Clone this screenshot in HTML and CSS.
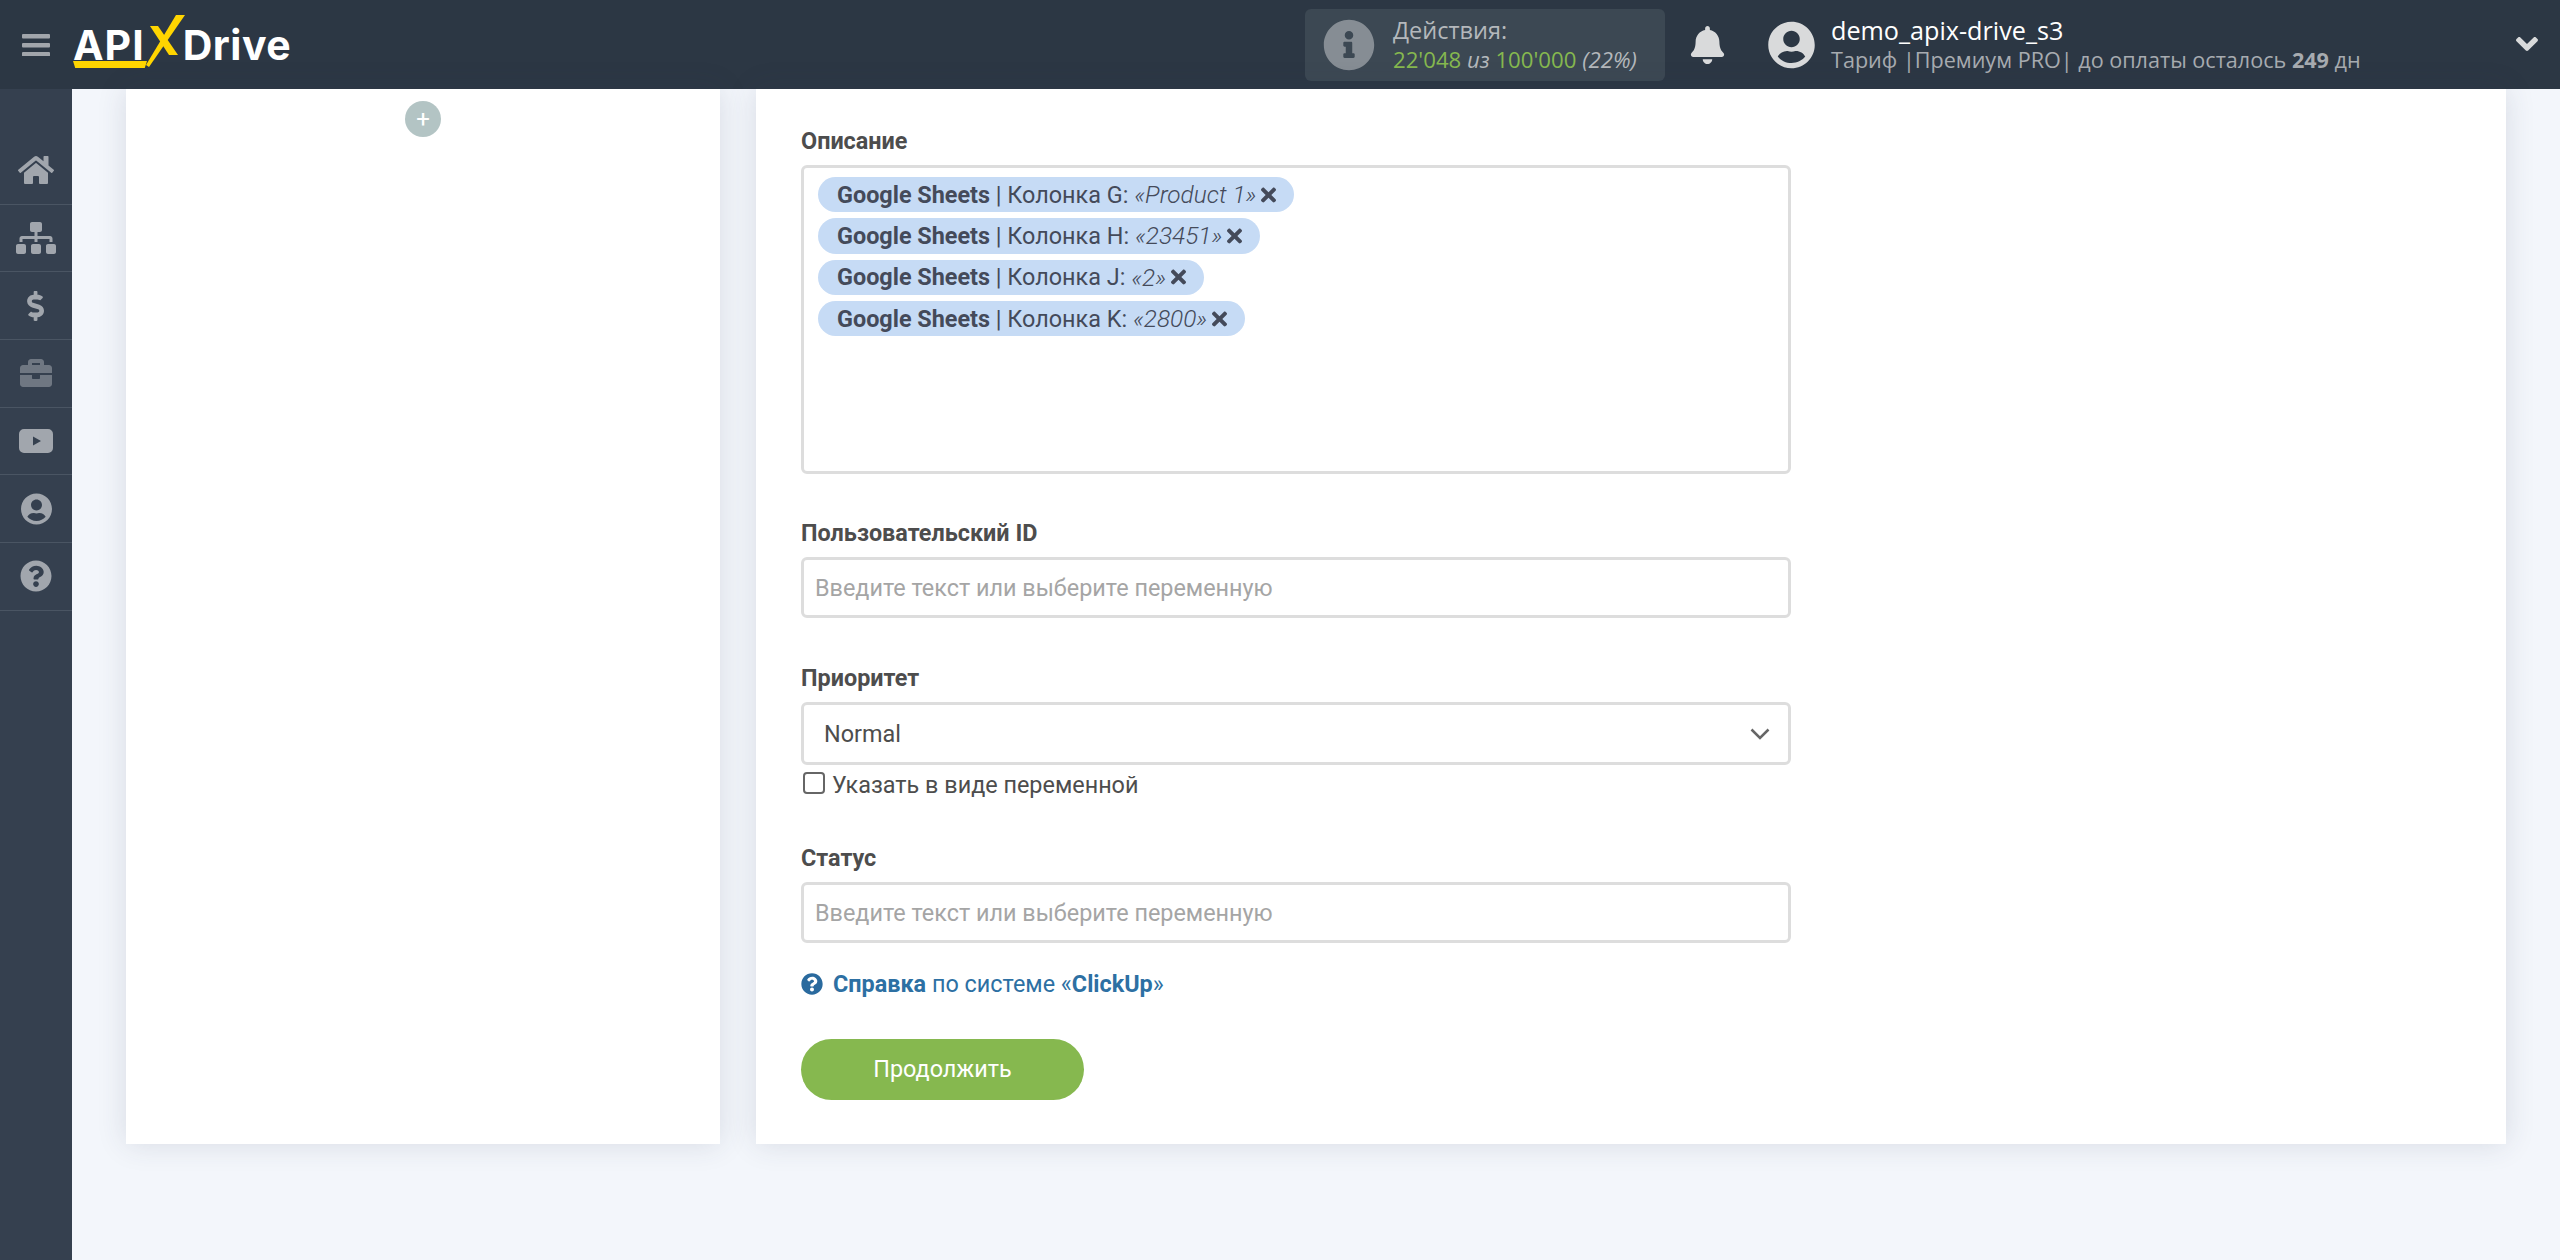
FILE: index.html
```html
<!DOCTYPE html>
<html>
	<head>
		<meta charset="UTF-8">
		<title>ApiX-Drive</title>
		<link rel="stylesheet" href="styles.css">
	</head>
	<body>
		<!--шапка-->
		<header class="topbar">
			<svg class="burger" viewBox="0 0 28 22"><rect y="0" width="28" height="4.4" rx="1"/><rect y="9" width="28" height="4.4" rx="1"/><rect y="18" width="28" height="4.4" rx="1"/></svg>
			<div class="logo">
				<span class="logo-api">API</span>
				<svg class="logo-x" viewBox="0 0 42 52"><polygon points="2,50 32,0 41,0 5,52"/><polygon points="6,11 14,11 34,40 25,40"/></svg>
				<span class="logo-drive">Drive</span>
			</div>
			<div class="stats">
				<svg class="stats-icon" viewBox="0 0 512 512"><path d="M256 8C119.043 8 8 119.083 8 256c0 136.997 111.043 248 248 248s248-111.003 248-248C504 119.083 392.957 8 256 8zm0 110c23.196 0 42 18.804 42 42s-18.804 42-42 42-42-18.804-42-42 18.804-42 42-42zm56 254c0 6.627-5.373 12-12 12h-88c-6.627 0-12-5.373-12-12v-24c0-6.627 5.373-12 12-12h12v-64h-12c-6.627 0-12-5.373-12-12v-24c0-6.627 5.373-12 12-12h64c6.627 0 12 5.373 12 12v100h12c6.627 0 12 5.373 12 12v24z"/></svg>
				<div class="stats-text">
					<div class="stats-title">Действия:</div>
					<div class="stats-line"><span class="green">22'048</span> <i>из</i> <span class="green">100'000</span> <i>(22%)</i></div>
				</div>
			</div>
			<svg class="bell" viewBox="0 0 448 512"><path d="M224 512c35.32 0 63.97-28.65 63.97-64H160.03c0 35.35 28.65 64 63.97 64zm215.39-149.71c-19.32-20.76-55.47-51.99-55.47-154.29 0-77.7-54.48-139.9-127.94-155.16V32c0-17.67-14.32-32-31.98-32s-31.98 14.33-31.98 32v20.84C118.56 68.1 64.08 130.3 64.08 208c0 102.3-36.15 133.53-55.47 154.29-6 6.45-8.66 14.16-8.61 21.71.11 16.4 12.98 32 32.1 32h383.8c19.12 0 32-15.6 32.1-32 .05-7.55-2.61-15.27-8.61-21.71z"/></svg>
			<svg class="avatar" viewBox="0 0 496 512"><path d="M248 8C111 8 0 119 0 256s111 248 248 248 248-111 248-248S385 8 248 8zm0 96c48.6 0 88 39.4 88 88s-39.4 88-88 88-88-39.4-88-88 39.4-88 88-88zm0 344c-58.7 0-111.3-26.6-146.5-68.2 18.8-35.4 55.6-59.8 98.5-59.8 2.4 0 4.8.4 7.1 1.1 13 4.2 26.6 6.9 40.9 6.9 14.3 0 28-2.7 40.9-6.9 2.3-.7 4.7-1.1 7.1-1.1 42.9 0 79.7 24.4 98.5 59.8C359.3 421.4 306.7 448 248 448z"/></svg>
			<div class="account">
				<div class="account-name">demo_apix-drive_s3</div>
				<div class="account-plan">Тариф |Премиум PRO| до оплаты осталось <b>249</b> дн</div>
			</div>
			<svg class="account-arrow" viewBox="0 0 320 512"><path d="M143 352.3L7 216.3c-9.4-9.4-9.4-24.6 0-33.9l22.6-22.6c9.4-9.4 24.6-9.4 33.9 0l96.4 96.4 96.4-96.4c9.4-9.4 24.6-9.4 33.9 0l22.6 22.6c9.4 9.4 9.4 24.6 0 33.9l-136 136c-9.2 9.4-24.4 9.4-33.8 0z"/></svg>
		</header>

		<div class="page">
			<!--боковое меню-->
			<nav class="sidebar">
				<a class="side-item"><svg viewBox="0 0 576 512" width="36" height="32"><path d="M280.37 148.26L96 300.11V464a16 16 0 0 0 16 16l112.06-.29a16 16 0 0 0 15.92-16V368a16 16 0 0 1 16-16h64a16 16 0 0 1 16 16v95.64a16 16 0 0 0 16 16.05L464 480a16 16 0 0 0 16-16V300L295.67 148.26a12.19 12.19 0 0 0-15.3 0zM571.6 251.47L488 182.56V44.05a12 12 0 0 0-12-12h-56a12 12 0 0 0-12 12v72.61L318.47 43a48 48 0 0 0-61 0L4.34 251.47a12 12 0 0 0-1.6 16.9l25.5 31A12 12 0 0 0 45.15 301l235.22-193.74a12.19 12.19 0 0 1 15.3 0L530.9 301a12 12 0 0 0 16.9-1.6l25.5-31a12 12 0 0 0-1.7-16.93z"/></svg></a>
				<a class="side-item"><svg viewBox="0 0 640 512" width="40" height="32"><path d="M128 352H32c-17.67 0-32 14.33-32 32v96c0 17.67 14.33 32 32 32h96c17.67 0 32-14.33 32-32v-96c0-17.67-14.33-32-32-32zm-24-80h192v48h48v-48h192v48h48v-57.59c0-21.17-17.23-38.41-38.41-38.41H344v-64h40c17.67 0 32-14.33 32-32V32c0-17.67-14.33-32-32-32H256c-17.67 0-32 14.33-32 32v96c0 17.67 14.33 32 32 32h40v64H94.41C73.23 224 56 241.23 56 262.41V320h48v-48zm264 80h-96c-17.67 0-32 14.33-32 32v96c0 17.67 14.33 32 32 32h96c17.67 0 32-14.33 32-32v-96c0-17.67-14.33-32-32-32zm240 0h-96c-17.67 0-32 14.33-32 32v96c0 17.67 14.33 32 32 32h96c17.67 0 32-14.33 32-32v-96c0-17.67-14.33-32-32-32z"/></svg></a>
				<a class="side-item"><svg viewBox="0 0 320 512" width="19" height="30"><path d="M209.2 233.4l-108-31.6C88.7 198.2 80 186.5 80 173.5c0-16.3 13.2-29.5 29.5-29.5h66.3c12.2 0 24.2 3.7 34.2 10.5 6.1 4.1 14.3 3.1 19.5-2l34.8-34c7.1-6.9 6.1-18.4-1.8-24.5C238 74.8 207.4 64.1 176 64V16c0-8.8-7.2-16-16-16h-32c-8.8 0-16 7.2-16 16v48h-2.5C45.8 64-5.4 118.7.5 183.6c4.2 46.1 39.4 83.6 83.8 96.6l102.5 30c12.5 3.7 21.2 15.3 21.2 28.3 0 16.3-13.2 29.5-29.5 29.5h-66.3C100 368 88 364.3 78 357.5c-6.1-4.1-14.3-3.1-19.5 2l-34.8 34c-7.1 6.9-6.1 18.4 1.8 24.5 24.5 19.2 55.1 29.9 86.5 30v48c0 8.8 7.2 16 16 16h32c8.8 0 16-7.2 16-16v-48.2c46.6-.9 90.3-28.6 105.7-72.7 21.5-61.6-14.6-124.8-72.5-141.7z"/></svg></a>
				<a class="side-item side-dim"><svg viewBox="0 0 512 512" width="32" height="32"><path d="M320 336c0 8.84-7.16 16-16 16h-96c-8.84 0-16-7.16-16-16v-48H0v144c0 25.6 22.4 48 48 48h416c25.6 0 48-22.4 48-48V288H320v48zm144-208h-80V80c0-25.6-22.4-48-48-48H176c-25.6 0-48 22.4-48 48v48H48c-25.6 0-48 22.4-48 48v80h512v-80c0-25.6-22.4-48-48-48zm-144 0H192V96h128v32z"/></svg></a>
				<a class="side-item"><svg viewBox="0 0 34 24" width="34" height="24"><path fill-rule="evenodd" d="M5 0h24a5 5 0 0 1 5 5v14a5 5 0 0 1-5 5H5a5 5 0 0 1-5-5V5a5 5 0 0 1 5-5zm9 7.500v9l8-4.500z"/></svg></a>
				<a class="side-item"><svg viewBox="0 0 496 512" width="31" height="32"><path d="M248 8C111 8 0 119 0 256s111 248 248 248 248-111 248-248S385 8 248 8zm0 96c48.6 0 88 39.4 88 88s-39.4 88-88 88-88-39.4-88-88 39.4-88 88-88zm0 344c-58.7 0-111.3-26.6-146.5-68.2 18.8-35.4 55.6-59.8 98.5-59.8 2.4 0 4.8.4 7.1 1.1 13 4.2 26.6 6.9 40.9 6.9 14.3 0 28-2.7 40.9-6.9 2.3-.7 4.7-1.1 7.1-1.1 42.9 0 79.7 24.4 98.5 59.8C359.3 421.4 306.7 448 248 448z"/></svg></a>
				<a class="side-item"><svg viewBox="0 0 512 512" width="32" height="32"><path d="M504 256c0 136.997-111.043 248-248 248S8 392.997 8 256C8 119.083 119.043 8 256 8s248 111.083 248 248zM262.655 90c-54.497 0-89.255 22.957-116.549 63.758-3.536 5.286-2.353 12.415 2.715 16.258l34.699 26.31c5.205 3.947 12.621 3.008 16.665-2.122 17.864-22.658 30.113-35.797 57.303-35.797 20.429 0 45.698 13.148 45.698 32.958 0 14.976-12.363 22.667-32.534 33.976C247.128 238.528 216 254.941 216 296v4c0 6.627 5.373 12 12 12h56c6.627 0 12-5.373 12-12v-1.333c0-28.462 83.186-29.647 83.186-106.667 0-58.002-60.165-102-116.531-102zM256 338c-25.365 0-46 20.635-46 46 0 25.364 20.635 46 46 46s46-20.636 46-46c0-25.365-20.635-46-46-46z"/></svg></a>
			</nav>

			<main class="content">
				<!--левая колонка-->
				<section class="card card-left">
					<div class="add-btn">+</div>
				</section>

				<!--форма-->
				<section class="card card-form">
					<div class="field field-desc">
						<div class="label">Описание</div>
						<div class="tagbox">
							<div class="chip"><b>Google Sheets</b> | Колонка G: <i>«Product 1»</i><svg class="chip-x" viewBox="0 0 352 512"><use href="#times"/></svg></div>
							<div class="chip"><b>Google Sheets</b> | Колонка H: <i>«23451»</i><svg class="chip-x" viewBox="0 0 352 512"><use href="#times"/></svg></div>
							<div class="chip"><b>Google Sheets</b> | Колонка J: <i>«2»</i><svg class="chip-x" viewBox="0 0 352 512"><use href="#times"/></svg></div>
							<div class="chip"><b>Google Sheets</b> | Колонка K: <i>«2800»</i><svg class="chip-x" viewBox="0 0 352 512"><use href="#times"/></svg></div>
						</div>
					</div>
					<div class="field field-id">
						<div class="label">Пользовательский ID</div>
						<div class="input placeholder">Введите текст или выберите переменную</div>
					</div>
					<div class="field field-priority">
						<div class="label">Приоритет</div>
						<div class="input select">
							<span>Normal</span>
							<svg class="select-arrow" viewBox="0 0 20 12"><polyline points="1.500,1.500 10,10 18.500,1.500"/></svg>
						</div>
						<label class="check"><span class="check-box"></span>Указать в виде переменной</label>
					</div>
					<div class="field field-status">
						<div class="label">Статус</div>
						<div class="input placeholder">Введите текст или выберите переменную</div>
					</div>
					<div class="help">
						<svg class="help-icon" viewBox="0 0 512 512"><path d="M504 256c0 136.997-111.043 248-248 248S8 392.997 8 256C8 119.083 119.043 8 256 8s248 111.083 248 248zM262.655 90c-54.497 0-89.255 22.957-116.549 63.758-3.536 5.286-2.353 12.415 2.715 16.258l34.699 26.31c5.205 3.947 12.621 3.008 16.665-2.122 17.864-22.658 30.113-35.797 57.303-35.797 20.429 0 45.698 13.148 45.698 32.958 0 14.976-12.363 22.667-32.534 33.976C247.128 238.528 216 254.941 216 296v4c0 6.627 5.373 12 12 12h56c6.627 0 12-5.373 12-12v-1.333c0-28.462 83.186-29.647 83.186-106.667 0-58.002-60.165-102-116.531-102zM256 338c-25.365 0-46 20.635-46 46 0 25.364 20.635 46 46 46s46-20.636 46-46c0-25.365-20.635-46-46-46z"/></svg>
						<span><b>Справка</b> по системе «<b>ClickUp</b>»</span>
					</div>
					<div class="btn-next">Продолжить</div>
				</section>
			</main>
		</div>

		<svg class="defs"><defs><path id="times" d="M242.72 256l100.07-100.07c12.28-12.28 12.28-32.19 0-44.48l-22.24-22.24c-12.28-12.28-32.19-12.28-44.48 0L176 189.28 75.93 89.21c-12.28-12.28-32.19-12.28-44.48 0L9.21 111.45c-12.28 12.28-12.28 32.19 0 44.48L109.28 256 9.21 356.07c-12.28 12.28-12.28 32.19 0 44.48l22.24 22.24c12.28 12.28 32.2 12.28 44.48 0L176 322.72l100.07 100.07c12.28 12.28 32.2 12.28 44.48 0l22.24-22.24c12.28-12.28 12.28-32.19 0-44.48L242.72 256z"/></defs></svg>
	</body>
</html>
```
FILE: styles.css
```css
*{
	margin: 0;
	padding: 0;
	box-sizing: border-box;
}
html, body{
	height: 100%;
	overflow: hidden;
}
body{
	background-color: #f3f6fb;
	font-family: Roboto, "Liberation Sans", sans-serif;
	color: #4d4d4d;
}
.defs{
	position: absolute;
	width: 0;
	height: 0;
}

/*шапка*/
.topbar{
	height: 89px;
	background-color: #2c3744;
	display: flex;
	align-items: center;
	font-family: "Open Sans", "Liberation Sans", sans-serif;
}
.burger{
	width: 28px;
	height: 22px;
	margin-left: 22px;
	fill: #a1a5ab;
	flex: none;
}
.logo{
	position: relative;
	display: flex;
	align-items: center;
	margin-left: 23px;
	width: 220px;
	height: 89px;
	font-family: Inter, "Open Sans", sans-serif;
	font-weight: 700;
	font-size: 41px;
	color: #fff;
}
.logo-api{
	letter-spacing: 1px;
}
.logo-drive{
	letter-spacing: 0.500px;
}
.logo::after{
	content: "";
	position: absolute;
	left: 0;
	top: 61px;
	width: 74px;
	height: 7px;
	background-color: #ffd500;
	clip-path: polygon(0 0, 100% 0, 97% 100%, 3% 100%);
}
.logo-x{
	width: 42px;
	height: 52px;
	margin: 15px -3px 0 -1px;
	fill: #ffd500;
	flex: none;
	align-self: flex-start;
}
.stats{
	margin-left: 1012px;
	width: 360px;
	height: 72px;
	background-color: #3c4853;
	border-radius: 6px;
	display: flex;
	align-items: center;
	padding-left: 18px;
	flex: none;
}
.stats-icon{
	width: 52px;
	height: 52px;
	fill: #868d94;
	flex: none;
}
.stats-text{
	margin-left: 18px;
	color: #b4b8bc;
}
.stats-title{
	font-size: 23.500px;
	line-height: 30px;
}
.stats-line{
	font-size: 22.200px;
	line-height: 30px;
}
.green{
	color: #86b84f;
}
.bell{
	width: 35px;
	height: 38px;
	margin-left: 25px;
	fill: #d9dadb;
	flex: none;
}
.avatar{
	width: 47px;
	height: 48px;
	margin-left: 43px;
	fill: #d9dadb;
	flex: none;
}
.account{
	margin-left: 16px;
	flex: 1;
}
.account-name{
	font-size: 25.200px;
	line-height: 31px;
	color: #fff;
}
.account-plan{
	font-size: 21.600px;
	line-height: 28px;
	color: #a7abb0;
}
.account-arrow{
	width: 22px;
	height: 36px;
	margin: -2px 22px 0 0;
	fill: #d9dadb;
	flex: none;
}

/*боковое меню*/
.page{
	display: flex;
	height: calc(100% - 89px);
}
.sidebar{
	width: 72px;
	flex: none;
	background-color: #35404f;
	padding-top: 48px;
}
.side-item{
	display: flex;
	align-items: center;
	justify-content: center;
	height: 67.700px;
	border-bottom: 1px solid #4a5563;
}
.side-item svg{
	fill: #a1a6ad;
}
.side-dim svg{
	fill: #6f7782;
}

/*контент*/
.content{
	flex: 1;
	display: grid;
	grid-template-columns: 594px 1750px;
	column-gap: 36px;
	align-items: stretch;
	align-content: start;
	padding-left: 54px;
}
.card{
	background-color: #fff;
	box-shadow: 0 0 28px rgba(50,60,85,.14);
}
.card-left{
	display: flex;
	justify-content: center;
	padding-top: 12px;
}
.add-btn{
	width: 36px;
	height: 36px;
	border-radius: 50%;
	background-color: #b3c4c4;
	color: #fff;
	font-size: 24px;
	line-height: 36px;
	text-align: center;
}
.card-form{
	padding: 38px 45px 44px;
}
.field{
	width: 990px;
}
.label{
	font-size: 23.400px;
	font-weight: 700;
	line-height: 28px;
	margin-bottom: 10px;
}
.tagbox{
	height: 309px;
	border: 3px solid #ddd;
	border-radius: 6px;
	padding: 9px 14px;
	display: flex;
	flex-direction: column;
	align-items: flex-start;
	gap: 6px;
}
.chip{
	height: 35.300px;
	border-radius: 18px;
	background-color: #c6dbf5;
	padding: 0 18px 0 19px;
	display: flex;
	align-items: center;
	white-space: pre;
	font-size: 23.400px;
	color: #444a5a;
}
.chip b{
	font-weight: 700;
}
.chip i{
	font-size: 24.400px;
	font-weight: 300;
}
.chip-x{
	width: 15px;
	height: 22px;
	margin-left: 5px;
	fill: #444a5a;
	flex: none;
}
.input{
	height: 61px;
	border: 3px solid #ddd;
	border-radius: 6px;
	display: flex;
	align-items: center;
	font-size: 23.400px;
}
.placeholder{
	padding-left: 11px;
	color: #a5a5a5;
}
.field-id{
	margin-top: 45px;
}
.field-priority{
	margin-top: 46px;
}
.select{
	height: 63px;
	justify-content: space-between;
	padding: 0 18px 0 20px;
}
.select-arrow{
	width: 20px;
	height: 12px;
	fill: none;
	stroke: #666;
	stroke-width: 2.500;
}
.check{
	display: flex;
	align-items: center;
	height: 34px;
	font-size: 23.400px;
	margin-top: 3px;
}
.check-box{
	width: 22px;
	height: 22px;
	margin: -4px 7px 0 2px;
	border: 2px solid #666;
	border-radius: 4px;
	background-color: #fff;
}
.field-status{
	margin-top: 42px;
}
.help{
	display: flex;
	align-items: center;
	margin-top: 27px;
	height: 28px;
	font-size: 23.400px;
	color: #2d70a3;
}
.help-icon{
	width: 22px;
	height: 22px;
	margin-right: 10px;
	fill: #2a6a9e;
}
.btn-next{
	width: 283px;
	height: 61px;
	margin-top: 41px;
	border-radius: 31px;
	background-color: #86b84f;
	color: #fff;
	font-size: 23.400px;
	line-height: 61px;
	text-align: center;
}
```
